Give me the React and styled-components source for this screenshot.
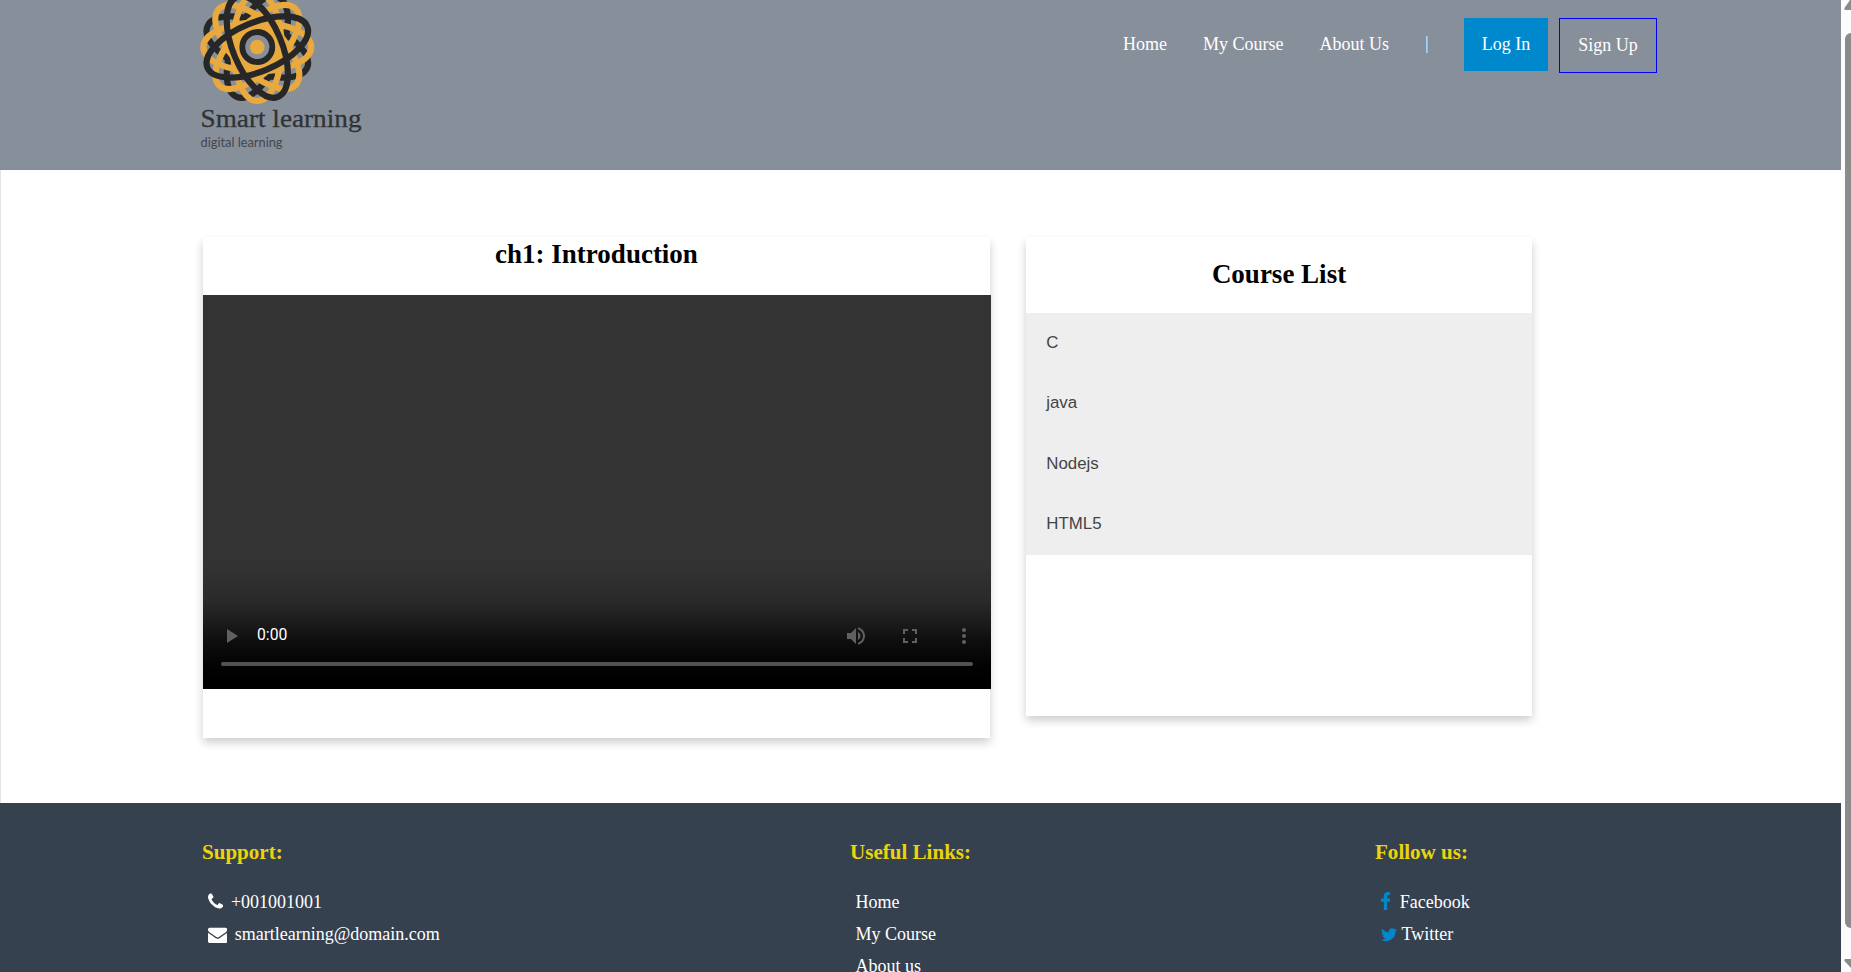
import React from "react";
import styled, { createGlobalStyle } from "styled-components";

const GlobalStyle = createGlobalStyle`
  * { box-sizing: border-box; }
  html, body { margin: 0; padding: 0; height: 100%; overflow: hidden; background: #fff; }
  body { font-family: "Liberation Serif", "Times New Roman", serif; font-size: 18px; color: #000; }
  h2, h3, ul { margin: 0; padding: 0; }
  ul { list-style: none; }
  a { color: inherit; text-decoration: none; }
`;

const Window = styled.div`
  display: flex;
  width: 1851px;
  height: 972px;
  overflow: hidden;
`;

const Page = styled.div`
  display: flex;
  flex-direction: column;
  width: 1841px;
  height: 972px;
  flex: none;
  overflow: hidden;
`;

const Header = styled.header`
  display: flex;
  justify-content: space-between;
  align-items: flex-start;
  height: 170px;
  flex: none;
  padding: 0 184px 0 200px;
  background: #878f9a;
  border-bottom: 1px solid #838a98;
`;

const LogoArt = styled.svg`
  display: block;
  width: 170px;
  height: 160px;
`;

const Nav = styled.nav`
  display: flex;
  align-items: flex-start;
  padding-top: 18px;
  color: #fff;
  line-height: 21px;
`;

const NavLink = styled.a`
  margin-right: ${(p) => p.$gap || 36}px;
  padding-top: 16px;
`;

const Divider = styled.span`
  width: 2px;
  height: 17px;
  margin: 18px 36px 0 0;
  border-left: 1px solid #9fd4f5;
  border-right: 1px solid #a4bccb;
`;

const NavButton = styled.a`
  display: block;
  height: ${(p) => (p.$outlined ? 55 : 53)}px;
  width: ${(p) => (p.$outlined ? 98 : 84)}px;
  margin-left: ${(p) => (p.$outlined ? 11 : 0)}px;
  padding-top: 16px;
  text-align: center;
  background: ${(p) => (p.$outlined ? "transparent" : "#0088cc")};
  border: ${(p) => (p.$outlined ? "1px solid #0000ff" : "none")};
`;

const Main = styled.main`
  display: flex;
  align-items: flex-start;
  gap: 36px;
  height: 633px;
  flex: none;
  padding: 67px 0 0 202px;
  border-left: 1px solid #e4e4e4;
`;

const Card = styled.section`
  width: ${(p) => p.$w}px;
  height: ${(p) => p.$h}px;
  box-shadow: 0 4.5px 9px rgba(0, 0, 0, 0.2);
`;

const CardTitle = styled.h2`
  height: ${(p) => p.$h}px;
  padding-top: ${(p) => p.$top}px;
  font-size: 27px;
  line-height: 31px;
  text-align: center;
`;

const Player = styled.div`
  display: flex;
  flex-direction: column;
  justify-content: flex-end;
  width: 788px;
  height: 394px;
  padding: 0 18px 23px;
  background: linear-gradient(
    to bottom,
    #333 0,
    #333 268px,
    #2a2a2a 305px,
    #1f1f1f 322px,
    #0f0f0f 345px,
    #040404 366px,
    #000 384px
  );
`;

const Controls = styled.div`
  display: flex;
  align-items: center;
  height: 24px;
  margin-bottom: 14px;
  color: #606060;
`;

const Glyph = styled.svg`
  display: block;
  width: 24px;
  height: 24px;
  fill: currentColor;
  margin-right: ${(p) => p.$mr || 0}px;
  margin-left: ${(p) => p.$ml || 0}px;
`;

const Time = styled.span`
  flex: 1;
  margin: -3px 0 0 14px;
  color: #fff;
  font: 15.75px/20px Roboto, sans-serif;
`;

const Track = styled.div`
  height: 4px;
  border-radius: 2px;
  background: #525252;
`;

const CourseItem = styled.li`
  height: 60.5px;
  padding: 19.5px 20.25px 0;
  background: #eee;
  color: #444;
  font: 16.875px/20px "Liberation Sans", Arial, sans-serif;
`;

const Footer = styled.footer`
  display: flex;
  height: 200px;
  flex: none;
  padding: 36px 0 0 202px;
  background: #36414f;
  color: #fff;
`;

const FooterColumn = styled.section`
  width: ${(p) => p.$w}px;
  flex: none;
`;

const FooterTitle = styled.h3`
  height: 47px;
  font-size: 21.06px;
  line-height: 27px;
  color: #ebd40b;
`;

const FooterLink = styled.li`
  display: flex;
  align-items: center;
  height: 32.25px;
  padding-left: 5.5px;
`;

const FooterIcon = styled.svg`
  display: block;
  flex: none;
  width: ${(p) => p.$w}px;
  height: 19.3px;
  margin-right: ${(p) => p.$gap}px;
  fill: ${(p) => p.$color || "#fff"};
`;

const Scrollbar = styled.aside`
  width: 10px;
  height: 972px;
  flex: none;
  padding-left: 4px;
  overflow: hidden;
  background: #fcfcfc;
`;

const Arrow = styled.svg`
  display: block;
  width: 12px;
  height: ${(p) => p.$h}px;
  fill: #8b8b8b;
  margin-left: -1px;
`;

const Thumb = styled.div`
  width: 12px;
  height: 895px;
  border-radius: 6px;
  background: #8b8b8b;
`;

const GOLD = "#e8a93f";
const INK = "#272727";

function Orbit({ angle, color, width = 6.2 }) {
  return (
    <ellipse
      rx="54"
      ry="24.4"
      transform={`rotate(${angle})`}
      fill="none"
      stroke={color}
      strokeWidth={width}
    />
  );
}

function Logo() {
  return (
    <LogoArt viewBox="0 0 170 160" aria-label="Smart learning">
      <defs>
        <clipPath id="core">
          <ellipse rx="54" ry="24.4" transform="rotate(-22.5)" />
        </clipPath>
      </defs>
      <g transform="translate(57.3 47)">
        <Orbit angle={22.5} color={INK} />
        <Orbit angle={112.5} color={INK} />
        <Orbit angle={0} color={GOLD} />
        <Orbit angle={90} color={GOLD} />
        <Orbit angle={45} color={GOLD} />
        <Orbit angle={135} color={GOLD} />
        <g clipPath="url(#core)">
          <ellipse rx="54" ry="24.4" transform="rotate(67.5)" fill={GOLD} />
        </g>
        <Orbit angle={-22.5} color={INK} />
        <Orbit angle={67.5} color={INK} />
        <circle r="15" fill="#878f9a" stroke={INK} strokeWidth="5.8" />
        <circle r="7.3" fill={GOLD} />
      </g>
      <text
        x="0.5"
        y="127"
        fill="#303235"
        fontFamily="'Liberation Serif', serif"
        fontSize="26"
        textLength="161"
        lengthAdjust="spacingAndGlyphs"
        stroke="#303235"
        strokeWidth="0.3"
      >
        Smart learning
      </text>
      <text
        x="0.5"
        y="146.5"
        fill="#42474e"
        fontFamily="Lato, sans-serif"
        fontSize="12.4"
        textLength="82"
        lengthAdjust="spacingAndGlyphs"
      >
        digital learning
      </text>
    </LogoArt>
  );
}

const PHONE =
  "M1600 1240q0 27-10 70.5t-21 68.5q-21 50-122 106-94 51-186 51-27 0-53-3.5t-57.5-12.5-47-14.5-55.5-20.5-49-18q-98-35-175-83-127-79-264-216t-216-264q-48-77-83-175-3-9-18-49t-20.5-55.5-14.5-47-12.5-57.5-3.5-53q0-92 51-186 56-101 106-122 25-11 68.5-21t70.5-10q14 0 21 3 18 6 53 76 11 19 30 54t35 63.5 31 53.5q3 4 17.5 25t21.5 35.5 7 28.5q0 20-28.5 50t-62 55-62 53-28.5 46q0 9 5 22.5t8.5 20.5 14 24 11.5 19q76 137 174 235t235 174q2 1 19 11.5t24 14 20.5 8.5 22.5 5q18 0 46-28.5t53-62 55-62 50-28.5q14 0 28.5 7t35.5 21.5 25 17.5q25 15 53.5 31t63.5 35 54 30q70 35 76 53 3 7 3 21z";
const ENVELOPE =
  "M1792 710v794q0 66-47 113t-113 47h-1472q-66 0-113-47t-47-113v-794q44 49 101 87 362 246 497 345 57 42 92.5 65.5t94.5 48 110 24.5h2q51 0 110-24.5t94.5-48 92.5-65.5q170-123 498-345 57-39 100-87zm0-294q0 79-49 151t-122 123q-376 261-468 325-10 7-42.5 31t-54 38.5-52 32.5-57.5 27-50 9h-2q-23 0-50-9t-57.5-27-52-32.5-54-38.5-42.5-31q-91-64-262-182.5t-205-142.5q-62-42-117-115.5t-55-136.5q0-78 41.5-130t118.5-52h1472q65 0 112.5 47t47.5 113z";
const FACEBOOK =
  "M1343 12v264h-157q-86 0-116 36t-30 108v189h293l-39 296h-254v759h-306v-759h-255v-296h255v-218q0-186 104-288.5t277-102.5q147 0 228 12z";
const TWITTER =
  "M1684 408q-67 98-162 167 1 14 1 42 0 130-38 259.5t-115.5 248.5-184.5 210.5-258 146-323 54.5q-271 0-496-145 35 4 78 4 225 0 401-138-105-2-188-64.5t-114-159.5q33 5 61 5 43 0 85-11-112-23-185.5-111.5t-73.5-205.5v-4q68 38 146 41-66-44-105-115t-39-154q0-88 44-163 121 149 294.5 238.5t371.5 99.5q-8-38-8-74 0-134 94.5-228.5t228.5-94.5q140 0 236 102 109-21 205-78-37 115-142 178 93-10 186-50z";

const COURSES = ["C", "java", "Nodejs", "HTML5"];

export default function App() {
  return (
    <>
      <GlobalStyle />
      <Window>
        <Page>
          <Header>
            <Logo />
            <Nav>
              <NavLink href="#">Home</NavLink>
              <NavLink href="#">My Course</NavLink>
              <NavLink href="#" $gap={37}>About Us</NavLink>
              <Divider />
              <NavButton href="#">Log In</NavButton>
              <NavButton href="#" $outlined>Sign Up</NavButton>
            </Nav>
          </Header>

          <Main>
            <Card $w={787} $h={501}>
              <CardTitle $h={58} $top={2}>ch1: Introduction</CardTitle>
              <Player>
                <Controls>
                  <Glyph viewBox="0 0 24 24" $ml={-2}><path d="M8 5v14l11-7z" /></Glyph>
                  <Time>0:00</Time>
                  <Glyph viewBox="0 0 24 24" $mr={30}>
                    <path d="M3 9v6h4l5 5V4L7 9H3zm13.5 3c0-1.77-1.02-3.29-2.5-4.03v8.05c1.48-.73 2.5-2.25 2.5-4.02zM14 3.23v2.06c2.89.86 5 3.54 5 6.71s-2.11 5.85-5 6.71v2.06c4.01-.91 7-4.49 7-8.77s-2.99-7.86-7-8.77z" />
                  </Glyph>
                  <Glyph viewBox="0 0 24 24" $mr={30}>
                    <path d="M7 14H5v5h5v-2H7v-3zm-2-4h2V7h3V5H5v5zm12 7h-3v2h5v-5h-2v3zM14 5v2h3v3h2V5h-5z" />
                  </Glyph>
                  <Glyph viewBox="0 0 24 24" $mr={-2.5}>
                    <path d="M12 8c1.1 0 2-.9 2-2s-.9-2-2-2-2 .9-2 2 .9 2 2 2zm0 2c-1.1 0-2 .9-2 2s.9 2 2 2 2-.9 2-2-.9-2-2-2zm0 6c-1.1 0-2 .9-2 2s.9 2 2 2 2-.9 2-2-.9-2-2-2z" />
                  </Glyph>
                </Controls>
                <Track />
              </Player>
            </Card>

            <Card $w={506} $h={479}>
              <CardTitle $h={76} $top={22}>Course List</CardTitle>
              <ul>
                {COURSES.map((name) => (
                  <CourseItem key={name}>{name}</CourseItem>
                ))}
              </ul>
            </Card>
          </Main>

          <Footer>
            <FooterColumn $w={648}>
              <FooterTitle>Support:</FooterTitle>
              <ul>
                <FooterLink>
                  <FooterIcon viewBox="192 0 1408 1792" $w={15.2} $gap={8.2}><path d={PHONE} /></FooterIcon>
                  +001001001
                </FooterLink>
                <FooterLink>
                  <FooterIcon viewBox="0 0 1792 1792" $w={19.3} $gap={8}><path d={ENVELOPE} /></FooterIcon>
                  smartlearning@domain.com
                </FooterLink>
              </ul>
            </FooterColumn>
            <FooterColumn $w={525}>
              <FooterTitle>Useful Links:</FooterTitle>
              <ul>
                <FooterLink>Home</FooterLink>
                <FooterLink>My Course</FooterLink>
                <FooterLink>About us</FooterLink>
              </ul>
            </FooterColumn>
            <FooterColumn $w={300}>
              <FooterTitle>Follow us:</FooterTitle>
              <ul>
                <FooterLink>
                  <FooterIcon viewBox="479 0 864 1792" $w={9.5} $gap={9.8} $color="#0088cc"><path d={FACEBOOK} /></FooterIcon>
                  Facebook
                </FooterLink>
                <FooterLink>
                  <FooterIcon viewBox="108 0 1576 1792" $w={16} $gap={5} $color="#0088cc"><path d={TWITTER} /></FooterIcon>
                  Twitter
                </FooterLink>
              </ul>
            </FooterColumn>
          </Footer>
        </Page>

        <Scrollbar>
          <Arrow viewBox="0 0 12 33" $h={33}><path d="M6 0h6v10H1.5Q0 10 .5 8z" /></Arrow>
          <Thumb />
          <Arrow viewBox="0 0 12 44" $h={44}><path d="M1.500 31H12v9H7L.5 33Q0 31 1.500 31z" /></Arrow>
        </Scrollbar>
      </Window>
    </>
  );
}
